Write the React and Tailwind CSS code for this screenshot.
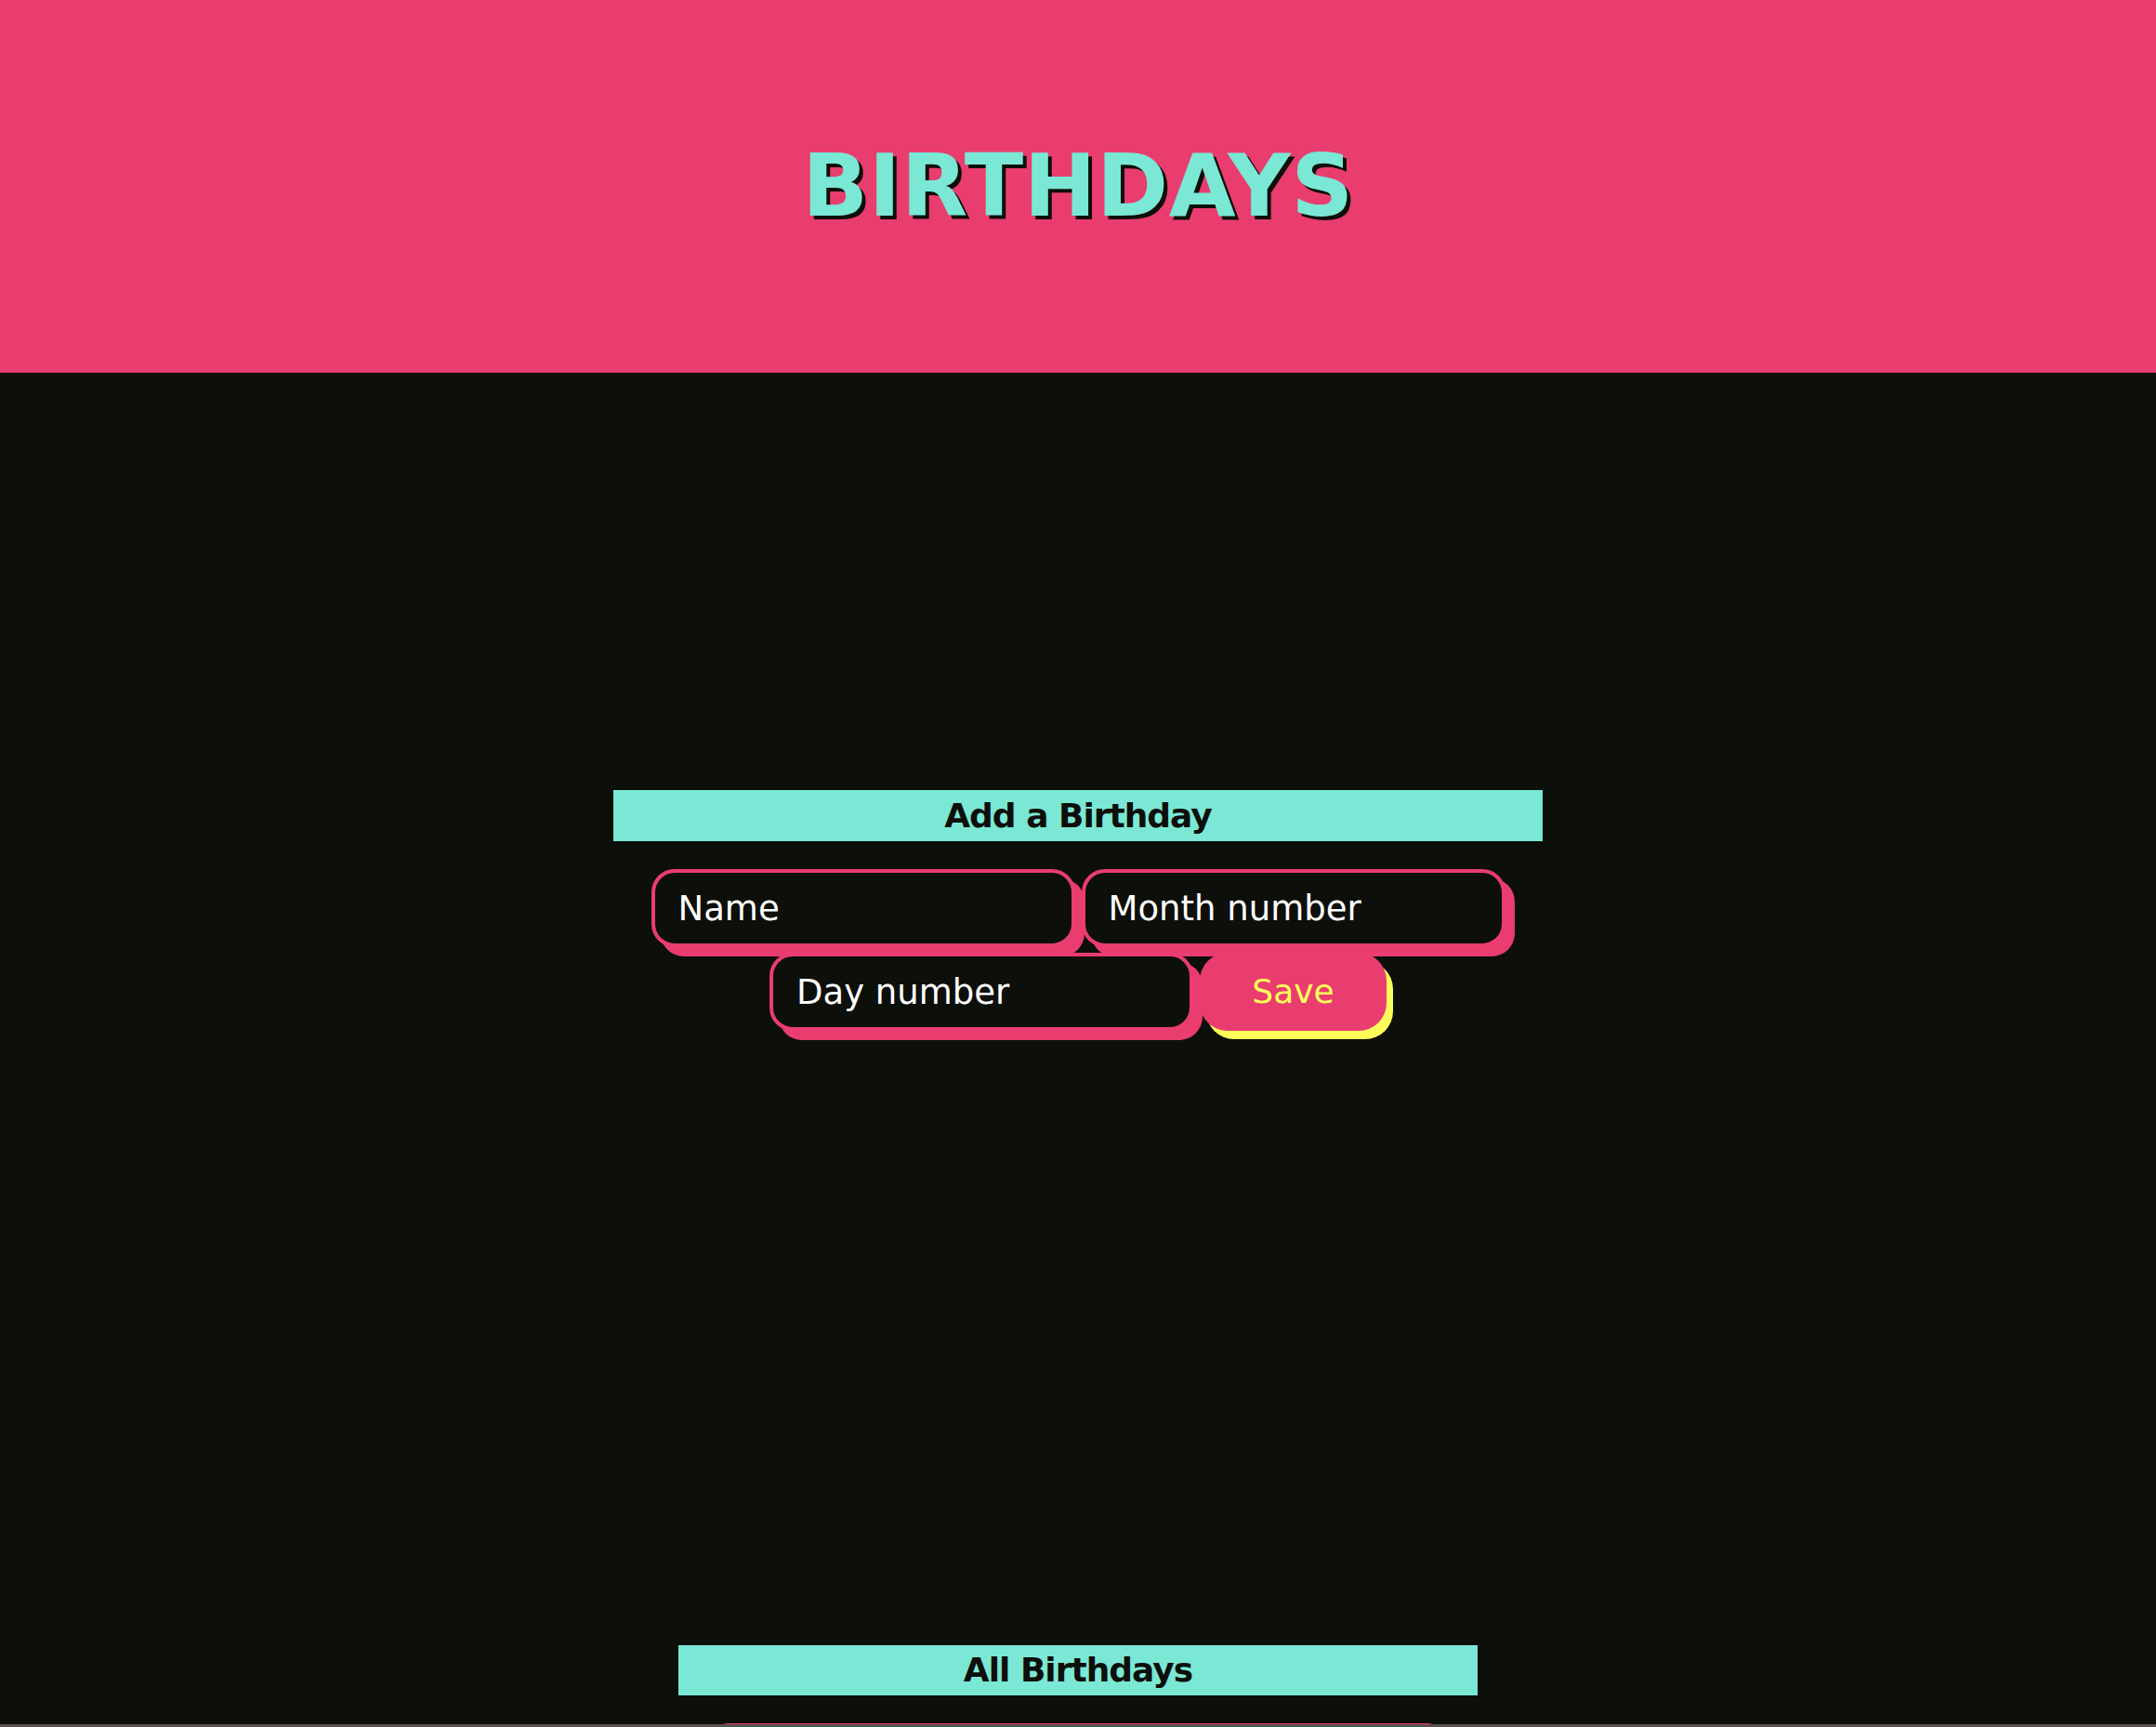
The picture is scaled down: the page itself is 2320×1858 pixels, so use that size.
export default function App() {
  return (
    <div className="h-[1858px] flex flex-col overflow-hidden bg-[#0d0f0a] font-['DejaVu_Sans',sans-serif]">
      <div className="flex-1 overflow-hidden flex flex-col">
        <header className="h-[401px] shrink-0 bg-[#e93d6f] flex items-center justify-center">
          <h1 className="text-[93px] leading-none font-bold tracking-[0.5px] text-[#7ae8d5] [text-shadow:4px_4px_0_#0d0f0a]">
            BIRTHDAYS
          </h1>
        </header>
        <main className="flex flex-col items-center">
          <section className="mt-[449px] w-[1000px] flex flex-col items-center">
            <h2 className="w-full h-[55px] bg-[#7ae8d5] text-[#0d0f0a] text-[36px] tracking-[-1px] font-bold flex items-center justify-center">
              Add a Birthday
            </h2>
            <form className="mt-[30px] w-full flex flex-wrap justify-center gap-x-[7px] gap-y-[6px]">
              <input
                type="text"
                placeholder="Name"
                className="w-[456px] h-[84px] rounded-[25px] border-4 border-[#e93d6f] bg-[#0d0f0a] pl-[25px] text-[37px] text-white placeholder:text-white outline-none shadow-[10px_10px_0_#e93d6f]"
              />
              <input
                type="text"
                placeholder="Month number"
                className="w-[456px] h-[84px] rounded-[25px] border-4 border-[#e93d6f] bg-[#0d0f0a] pl-[25px] text-[37px] text-white placeholder:text-white outline-none shadow-[10px_10px_0_#e93d6f]"
              />
              <input
                type="text"
                placeholder="Day number"
                className="w-[456px] h-[84px] rounded-[25px] border-4 border-[#e93d6f] bg-[#0d0f0a] pl-[25px] text-[37px] text-white placeholder:text-white outline-none shadow-[10px_10px_0_#e93d6f]"
              />
              <button
                type="button"
                className="w-[201px] h-[84px] rounded-[30px] bg-[#e93d6f] text-[#fdfd5a] text-[36px] shadow-[7px_9px_0_#fdfd5a]"
              >
                Save
              </button>
            </form>
          </section>
          <section className="mt-[661px] w-[860px] flex flex-col items-center">
            <h2 className="w-full h-[54px] bg-[#7ae8d5] text-[#0d0f0a] text-[36px] tracking-[-1px] font-bold flex items-center justify-center">
              All Birthdays
            </h2>
            <div className="mt-[30px] w-[800px] h-[100px] rounded-[25px] border-4 border-[#e93d6f] bg-[#0d0f0a]"></div>
          </section>
        </main>
      </div>
      <div className="h-[3px] shrink-0 bg-[#5a524c]"></div>
    </div>
  );
}
